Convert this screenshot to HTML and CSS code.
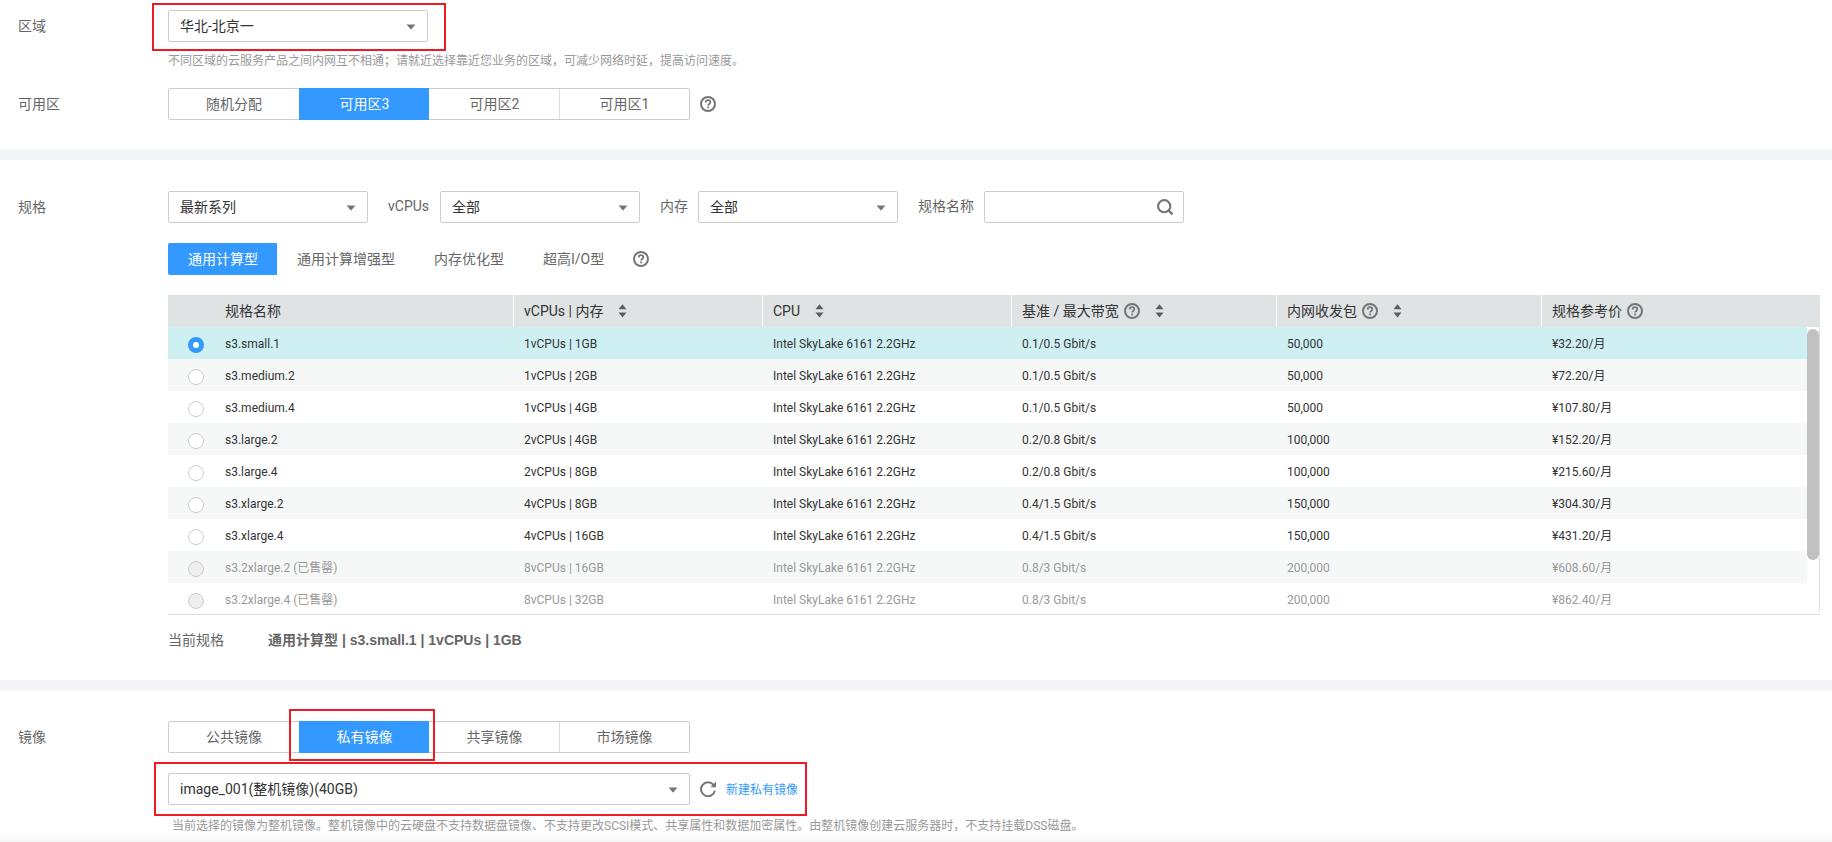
FILE: index.html
```html
<!DOCTYPE html>
<html lang="zh-CN">
<head>
<meta charset="utf-8">
<meta name="viewport" content="width=device-width, initial-scale=1">
<title>购买弹性云服务器</title>
<link rel="stylesheet" href="styles.css">
</head>
<body>
<svg class="sprite" aria-hidden="true">
  <symbol id="caret" viewBox="0 0 10 6"><path d="M.6.5h8.8L5.6 5.1q-.6.6-1.2 0z" fill="#757575"/></symbol>
  <symbol id="help" viewBox="0 0 16 16">
    <circle cx="8" cy="8" r="7" fill="none" stroke="#757575" stroke-width="2"/>
    <path d="M5.7 6.5c0-1.4 1-2.3 2.3-2.3s2.3.9 2.3 2.1c0 1.6-2.2 1.7-2.2 3.3" fill="none" stroke="#757575" stroke-width="1.8"/>
    <rect x="7.2" y="10.5" width="1.8" height="1.8" fill="#757575"/>
  </symbol>
  <symbol id="sort" viewBox="0 0 9 14"><path d="M4.5.3 8.5 5.3h-8zM.5 8.5h8l-4 5z" fill="#5e5e5e"/></symbol>
</svg>

<main class="page">
  <section class="section">
    <div class="row">
      <label class="row-label" for="region">区域</label>
      <div class="row-body">
        <div class="marked marked-region">
          <div class="select select-region">
            <select id="region"><option>华北-北京一</option><option>华东-上海二</option></select>
            <svg class="caret"><use href="#caret"/></svg>
          </div>
        </div>
        <p class="hint">不同区域的云服务产品之间内网互不相通；请就近选择靠近您业务的区域，可减少网络时延，提高访问速度。</p>
      </div>
    </div>
    <div class="row row-zone">
      <span class="row-label">可用区</span>
      <div class="row-body line">
        <div class="segments">
          <button type="button" class="segment">随机分配</button>
          <button type="button" class="segment active">可用区3</button>
          <button type="button" class="segment">可用区2</button>
          <button type="button" class="segment">可用区1</button>
        </div>
        <button type="button" class="icon-btn" aria-label="帮助"><svg class="help"><use href="#help"/></svg></button>
      </div>
    </div>
  </section>

  <section class="section">
    <div class="row">
      <span class="row-label">规格</span>
      <div class="row-body stack">
        <div class="filters">
          <div class="select"><select aria-label="系列"><option>最新系列</option></select><svg class="caret"><use href="#caret"/></svg></div>
          <div class="filter">
            <label class="label-vcpus" for="vcpus">vCPUs</label>
            <div class="select"><select id="vcpus"><option>全部</option></select><svg class="caret"><use href="#caret"/></svg></div>
          </div>
          <div class="filter">
            <label for="memory">内存</label>
            <div class="select"><select id="memory"><option>全部</option></select><svg class="caret"><use href="#caret"/></svg></div>
          </div>
          <div class="filter">
            <label for="flavor">规格名称</label>
            <div class="search">
              <input id="flavor" type="text">
              <button type="button" class="icon-btn search-btn" aria-label="搜索">
                <svg class="help" viewBox="0 0 16 16"><circle cx="7.2" cy="7.2" r="6.1" fill="none" stroke="#757575" stroke-width="2.1"/><path d="m10.8 10.8 4.6 4.6" stroke="#757575" stroke-width="2.3"/></svg>
              </button>
            </div>
          </div>
        </div>

        <div class="tabs">
          <button type="button" class="tab active">通用计算型</button>
          <button type="button" class="tab">通用计算增强型</button>
          <button type="button" class="tab">内存优化型</button>
          <button type="button" class="tab">超高I/O型</button>
          <button type="button" class="icon-btn" aria-label="帮助"><svg class="help"><use href="#help"/></svg></button>
        </div>

        <div class="grid-box">
          <table class="flavors">
            <colgroup><col class="c-name"><col class="c-spec"><col class="c-spec"><col class="c-net"><col class="c-net"><col></colgroup>
            <thead>
              <tr>
                <th>规格名称</th>
                <th><div class="th">vCPUs | 内存<svg class="sort"><use href="#sort"/></svg></div></th>
                <th><div class="th">CPU<svg class="sort"><use href="#sort"/></svg></div></th>
                <th><div class="th">基准 / 最大带宽<svg class="help"><use href="#help"/></svg><svg class="sort"><use href="#sort"/></svg></div></th>
                <th><div class="th">内网收发包<svg class="help"><use href="#help"/></svg><svg class="sort"><use href="#sort"/></svg></div></th>
                <th><div class="th">规格参考价<svg class="help"><use href="#help"/></svg></div></th>
              </tr>
            </thead>
            <tbody>
              <tr class="selected"><td><label class="pick"><input type="radio" name="f" checked>s3.small.1</label></td><td>1vCPUs | 1GB</td><td>Intel SkyLake 6161 2.2GHz</td><td>0.1/0.5 Gbit/s</td><td>50,000</td><td>¥32.20/月</td></tr>
              <tr><td><label class="pick"><input type="radio" name="f">s3.medium.2</label></td><td>1vCPUs | 2GB</td><td>Intel SkyLake 6161 2.2GHz</td><td>0.1/0.5 Gbit/s</td><td>50,000</td><td>¥72.20/月</td></tr>
              <tr><td><label class="pick"><input type="radio" name="f">s3.medium.4</label></td><td>1vCPUs | 4GB</td><td>Intel SkyLake 6161 2.2GHz</td><td>0.1/0.5 Gbit/s</td><td>50,000</td><td>¥107.80/月</td></tr>
              <tr><td><label class="pick"><input type="radio" name="f">s3.large.2</label></td><td>2vCPUs | 4GB</td><td>Intel SkyLake 6161 2.2GHz</td><td>0.2/0.8 Gbit/s</td><td>100,000</td><td>¥152.20/月</td></tr>
              <tr><td><label class="pick"><input type="radio" name="f">s3.large.4</label></td><td>2vCPUs | 8GB</td><td>Intel SkyLake 6161 2.2GHz</td><td>0.2/0.8 Gbit/s</td><td>100,000</td><td>¥215.60/月</td></tr>
              <tr><td><label class="pick"><input type="radio" name="f">s3.xlarge.2</label></td><td>4vCPUs | 8GB</td><td>Intel SkyLake 6161 2.2GHz</td><td>0.4/1.5 Gbit/s</td><td>150,000</td><td>¥304.30/月</td></tr>
              <tr><td><label class="pick"><input type="radio" name="f">s3.xlarge.4</label></td><td>4vCPUs | 16GB</td><td>Intel SkyLake 6161 2.2GHz</td><td>0.4/1.5 Gbit/s</td><td>150,000</td><td>¥431.20/月</td></tr>
              <tr class="soldout"><td><label class="pick"><input type="radio" name="f" disabled>s3.2xlarge.2 (已售罄)</label></td><td>8vCPUs | 16GB</td><td>Intel SkyLake 6161 2.2GHz</td><td>0.8/3 Gbit/s</td><td>200,000</td><td>¥608.60/月</td></tr>
              <tr class="soldout"><td><label class="pick"><input type="radio" name="f" disabled>s3.2xlarge.4 (已售罄)</label></td><td>8vCPUs | 32GB</td><td>Intel SkyLake 6161 2.2GHz</td><td>0.8/3 Gbit/s</td><td>200,000</td><td>¥862.40/月</td></tr>
            </tbody>
          </table>
          <div class="scrollbar"><div class="thumb"></div></div>
        </div>

        <div class="current"><span class="current-label">当前规格</span><strong class="current-value">通用计算型 | s3.small.1 | 1vCPUs | 1GB</strong></div>
      </div>
    </div>
  </section>

  <section class="section section-last">
    <div class="row">
      <span class="row-label">镜像</span>
      <div class="row-body">
        <div class="segments">
          <button type="button" class="segment">公共镜像</button>
          <button type="button" class="segment active marked marked-segment">私有镜像</button>
          <button type="button" class="segment">共享镜像</button>
          <button type="button" class="segment">市场镜像</button>
        </div>
        <div class="line image-line marked marked-image">
          <div class="select select-image">
            <select aria-label="私有镜像"><option>image_001(整机镜像)(40GB)</option></select>
            <svg class="caret"><use href="#caret"/></svg>
          </div>
          <button type="button" class="icon-btn" aria-label="刷新">
            <svg class="help" viewBox="0 0 16 16"><path d="M13.3 3.6A7 7 0 1 0 14.9 9.6" fill="none" stroke="#757575" stroke-width="2"/><path d="M16 .6v5.6h-5.6z" fill="#757575"/></svg>
          </button>
          <a class="link" href="#">新建私有镜像</a>
        </div>
        <p class="hint hint-image">当前选择的镜像为整机镜像。整机镜像中的云硬盘不支持数据盘镜像、不支持更改SCSI模式、共享属性和数据加密属性。由整机镜像创建云服务器时，不支持挂载DSS磁盘。</p>
      </div>
    </div>
  </section>
</main>
</body>
</html>
```
FILE: styles.css
```css
* { box-sizing: border-box; }

body {
  margin: 0;
  background: #fff;
  color: #666;
  font: 14px/20px Roboto, "Noto Sans CJK SC", sans-serif;
}

button, input, select { font: inherit; color: inherit; }
button { padding: 0; border: 0; background: none; cursor: pointer; }
p { margin: 0; }

.sprite { position: absolute; width: 0; height: 0; }

.section {
  padding: 31px 12px 30px 18px;
  border-bottom: 10px solid #f2f4f7;
}
.section:first-child { padding-top: 10px; }
.section-last {
  padding-bottom: 7px;
  border-bottom: 0;
  background: linear-gradient(#fff, #f7f7f7) bottom / 100% 12px no-repeat;
}

.row { display: grid; grid-template-columns: 150px minmax(0, 1fr); }
.row-zone { margin-top: 18px; }
.row-label { line-height: 32px; }
.line { display: flex; align-items: center; gap: 10px; }
.stack { display: grid; gap: 20px; }

.hint { margin-top: 10px; color: #999; font-size: 12px; line-height: 18px; }
.hint-image { margin: 12px 0 0 4px; }

.icon-btn { display: flex; }
.help { flex: none; width: 16px; height: 16px; }

/* Highlight frames */
.marked { position: relative; width: fit-content; }
.marked::after {
  content: "";
  position: absolute;
  z-index: 1;
  border: 2px solid #ed1c24;
  pointer-events: none;
}
.marked-region::after { inset: -7px -18px -9px -16px; }
.marked-segment::after { inset: -12px -6px -8px -11px; }
.marked-image::after { inset: -11px -9px -11px -14px; }

/* Drop-downs and inputs */
.select { position: relative; width: 200px; }
.select-region { width: 260px; }
.select-image { width: 522px; }
.select select, .search input {
  display: block;
  width: 100%;
  height: 32px;
  padding: 0 32px 0 11px;
  border: 1px solid #ccc;
  border-radius: 2px;
  background: #fff;
  color: #333;
  appearance: none;
}
.caret {
  position: absolute;
  top: 14px;
  right: 12px;
  width: 10px;
  height: 6px;
  pointer-events: none;
}
.filters { display: flex; gap: 20px; }
.filter { display: flex; gap: 10px; }
.filter label { line-height: 30px; }
.label-vcpus { width: 42px; }
.search { position: relative; width: 200px; }
.search-btn { position: absolute; top: 8px; right: 11px; }

/* Segmented buttons */
.segments {
  display: flex;
  width: 522px;
  height: 32px;
  border: 1px solid #ccc;
  border-radius: 2px;
}
.segment { width: 25%; border-left: 1px solid #ddd; }
.segment:first-child { border-left: 0; }
.segment.active { height: 32px; margin: -1px 0; border-color: #3399ff; background: #3399ff; color: #fff; }
.segment.active + .segment { border-left-color: transparent; }
.image-line { margin-top: 20px; }
.link { padding-top: 2px; color: #3399ff; font-size: 12px; text-decoration: none; }

/* Flavor tabs */
.tabs { display: flex; align-items: center; }
.tab { height: 32px; padding: 0 19px 0 20px; }
.tab.active { border-radius: 2px 0 0 2px; background: #3399ff; color: #fff; }
.tabs .icon-btn { margin-left: 10px; }

/* Flavor table */
.grid-box {
  position: relative;
  height: 320px;
  overflow: hidden;
  border-bottom: 1px solid #ddd;
}
.flavors {
  width: 100%;
  table-layout: fixed;
  border-collapse: separate;
  border-spacing: 0;
  color: #333;
}
.c-name { width: 345px; }
.c-spec { width: 249px; }
.c-net { width: 265px; }
.flavors th {
  height: 32px;
  padding: 0 0 0 10px;
  border-left: 1px solid #fff;
  background: #dfe3e4;
  font-weight: 400;
  text-align: left;
}
.flavors th:first-child { padding-left: 57px; border-left: 0; }
.th { display: flex; align-items: center; }
.th .help { margin-left: 5px; }
.sort { flex: none; width: 9px; height: 14px; margin-left: 15px; }
.flavors td { height: 32px; padding: 2px 0 0 11px; font-size: 12px; }
.flavors td:first-child { padding-left: 20px; }
.flavors tbody tr:nth-child(even) { background: #f6f8f8; }
.flavors tbody .selected { background: #cff0f3; }
.flavors .soldout { color: #999; }

.pick { display: flex; align-items: center; gap: 21px; }
.pick input {
  width: 16px;
  height: 16px;
  margin: 2px 0 0;
  border: 1px solid #ccc;
  border-radius: 50%;
  background: #fff;
  appearance: none;
}
.pick input:checked { border: 5px solid #3399ff; }
.pick input:disabled { background: #eee; }

.scrollbar {
  position: absolute;
  top: 32px;
  right: 0;
  bottom: 3px;
  width: 13px;
  padding-top: 2px;
  border-right: 1px solid #ddd;
  background: #fff;
}
.thumb { height: 231px; border-radius: 6px; background: #c1c1c1; }

.current { display: flex; margin-top: -5px; }
.current-label { width: 100px; }
.current-value { font-family: "Liberation Sans", "Noto Sans CJK SC", sans-serif; }
```
